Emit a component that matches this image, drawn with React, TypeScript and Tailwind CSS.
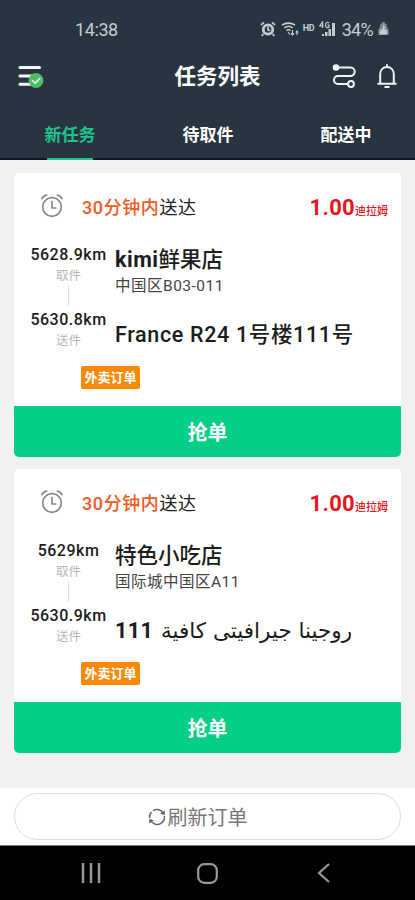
import type { ReactNode } from "react";

type Task = {
  pickupKm: string;
  dropKm: string;
  shop: ReactNode;
  shopAddress: string;
  destination: ReactNode;
};

const tasks: Task[] = [
  {
    pickupKm: "5628.9km",
    dropKm: "5630.8km",
    shop: (
      <>
        <span className="font-bold tracking-[0.5px]">kimi</span>鲜果店
      </>
    ),
    shopAddress: "中国区B03-011",
    destination: "France R24 1号楼111号",
  },
  {
    pickupKm: "5629km",
    dropKm: "5630.9km",
    shop: "特色小吃店",
    shopAddress: "国际城中国区A11",
    destination: (
      <span className="flex items-center">
        <span className="w-[46px] font-bold tracking-[0.4px]">111</span>
        <span dir="rtl" className="font-['DejaVu_Sans'] text-[21.5px] font-normal tracking-normal">
          روجينا جيرافيتى كافية
        </span>
      </span>
    ),
  },
];

function StatusBar() {
  return (
    <div className="flex h-[58px] shrink-0 items-center pr-[26px] pl-[75px] text-[#c3ccd2]">
      <span className="grow text-[18px] tracking-[-0.4px]">14:38</span>
      <svg className="mr-[5px] h-4 w-4" viewBox="0 0 16 16" fill="none" stroke="currentColor">
        <circle cx="8" cy="8.5" r="4.7" strokeWidth="2.8" />
        <path d="M8 5.5v3.3l2 .8M1 4l3-2.7M15 4l-3-2.7M3.5 13l-1.8 2M12.5 13l1.8 2" strokeWidth="1.7" />
      </svg>
      <svg className="mr-[4px] h-4 w-[18px]" viewBox="0 0 18 16" fill="none" stroke="currentColor" strokeWidth="1.6">
        <path d="M1 4.2C4.500 1.400 10.500 1.400 14 4.200M3.300 7c2.500-2 6-2 8.400 0M5.600 9.500c1.300-1 2.600-1 3.800 0" />
        <path d="M7 11l2 2.500M11.500 9v5M10 12.500l1.500 1.500 1.500-1.500M16 14v-4M14.800 11.500L16 10l1.200 1.500" strokeWidth="1.2" />
      </svg>
      <span className="mr-[3px] w-[13px] text-[9px] font-bold tracking-[-0.2px]">HD</span>
      <svg className="mr-[6px] h-4 w-[17px]" viewBox="0 0 17 16" fill="currentColor">
        <path d="M3 15v-2h2v2zM6 15v-4h2.500v4zM9.500 15V8H12v7zM13 15V2h3v13z" />
        <path d="M3.500 7V1L.8 5h4M10 2.200C8.500.5 6.500 1.500 6.500 4s2 3.500 3.500 2V4.200H8.500" fill="none" stroke="currentColor" strokeWidth="1.200" />
      </svg>
      <span className="mr-[5px] text-[18px] tracking-[-0.7px]">34%</span>
      <svg className="h-[14px] w-[11px]" viewBox="0 0 11 15" fill="currentColor">
        <path d="M4 0h3v2h2v3l2 3v6H0V8l2-3V2h2z" opacity=".55" />
        <path d="M5.500 2.500l2 4h-2l4 3v4h-8v-4l3-2z" />
      </svg>
    </div>
  );
}

function Header() {
  return (
    <header className="flex h-[160px] shrink-0 flex-col border-b-2 border-[#111526] bg-[#283541]">
      <StatusBar />
      <div className="grid h-[36px] shrink-0 grid-cols-[100px_1fr_100px] items-center">
        <svg className="ml-[17px] h-[26px] w-[27px]" viewBox="0 0 27 26" fill="none" strokeLinecap="round">
          <path d="M3 4.500h19.500M3 13h12M3 21.300h12" stroke="#f4f7f9" strokeWidth="3" />
          <circle cx="19" cy="17.500" r="7.400" fill="#4fbd67" />
          <path d="M15.500 17.500l2.600 2.700 4.600-4.600" stroke="#e6ffea" strokeWidth="1.600" />
        </svg>
        <h1 className="pt-[3px] pl-[20px] text-center text-[21.500px] font-bold whitespace-nowrap text-white">任务列表</h1>
        <div className="flex items-center gap-[19px] pl-[17px] text-[#eef2f5]">
          <svg className="h-[26px] w-[25px] shrink-0" viewBox="0 0 25 26" fill="none" stroke="currentColor" strokeWidth="2">
            <path d="M4 4.500h14.500a4.200 4.200 0 0 1 0 8.400H6a4 4 0 0 0 0 8.100h10" />
            <circle cx="4" cy="4.500" r="2.300" fill="currentColor" />
            <circle cx="19" cy="21" r="2.900" />
          </svg>
          <svg className="h-[26px] w-[22px] shrink-0" viewBox="0 0 22 26" fill="none" stroke="currentColor" strokeWidth="2">
            <path d="M4.200 20v-8.500C4.200 7 7 4 11 4s6.800 3 6.800 7.500V20" />
            <path d="M1.500 20.800h19M8.500 24h5M11 4V1.300" />
          </svg>
        </div>
      </div>
      <nav className="grid grow grid-cols-3 items-center justify-items-center pt-[19px] pl-px text-[17px] font-bold text-white">
        <span className="text-[#1dc28b]">新任务</span>
        <span>待取件</span>
        <span>配送中</span>
      </nav>
    </header>
  );
}

function AlarmIcon() {
  return (
    <svg className="-mt-[2px] h-[24px] w-[22px]" viewBox="0 0 22 24" fill="none" stroke="#888888" strokeWidth="1.700" strokeLinecap="round">
      <circle cx="11" cy="13" r="9.300" />
      <path d="M11 7.500V14h3.500M1 4.500C2 2.500 3.300 1.500 5.500 1.200M21 4.500c-1-2-2.300-3-4.500-3.300" />
    </svg>
  );
}

function TaskCard({ task }: { task: Task }) {
  return (
    <article className="flex h-[284px] shrink-0 flex-col overflow-hidden rounded-[5px] bg-white">
      <div className="flex h-[68px] items-center pr-[13px] pl-[27px]">
        <AlarmIcon />
        <div className="ml-[19px] grow pt-px text-[18px] font-medium tracking-[0.6px] text-[#222222]">
          <span className="text-[#f15a24]">30分钟内</span>
          <span className="font-normal">送达</span>
        </div>
        <div className="flex items-baseline text-[#e8131b]">
          <span className="text-[22px] font-bold tracking-[0.3px]">1.00</span>
          <span className="text-[11px] font-medium">迪拉姆</span>
        </div>
      </div>
      <div className="flex h-[125px] pl-[16px]">
        <div className="flex w-[77px] shrink-0 flex-col items-center">
          <span className="mt-[2px] h-[24px] text-[16px] leading-[24px] font-medium tracking-[0.5px] text-[#1c1c1c]">{task.pickupKm}</span>
          <span className="h-[17px] text-[12.500px] leading-[17px] text-[#b5b5b5]">取件</span>
          <span className="mt-px h-[21px] w-px bg-[#dddddd]" />
          <span className="mt-[2px] h-[24px] text-[16px] leading-[24px] font-medium tracking-[0.500px] text-[#1c1c1c]">{task.dropKm}</span>
          <span className="h-[17px] text-[12.500px] leading-[17px] text-[#b5b5b5]">送件</span>
        </div>
        <div className="ml-[8px] flex flex-col whitespace-nowrap">
          <span className="mt-[4px] h-[30px] text-[21.500px] leading-[30px] font-medium text-[#1c1c1c]">{task.shop}</span>
          <span className="h-[22px] text-[15.500px] leading-[22px] tracking-[0.5px] text-[#444444]">{task.shopAddress}</span>
          <span className="mt-[23px] h-[30px] text-[21.500px] leading-[30px] font-medium tracking-[0.650px] text-[#1c1c1c]">{task.destination}</span>
        </div>
      </div>
      <div className="flex grow pl-[67px]">
        <span className="flex h-[23px] w-[59px] items-center justify-center rounded-[2px] bg-[#fb8908] text-[13px] font-bold text-white">外卖订单</span>
      </div>
      <button className="h-[51px] bg-[#04cf87] pt-[3px] text-[20px] font-bold text-white">抢单</button>
    </article>
  );
}

export default function App() {
  return (
    <div className="flex h-[900px] w-[415px] flex-col overflow-hidden bg-[#f1f1f1] font-[Roboto,'Noto_Sans_CJK_SC',sans-serif]">
      <Header />
      <div className="-mt-[2px] ml-[47px] h-[2px] w-[46px] shrink-0 bg-[#1dc28b]" />
      <main className="flex h-[628px] shrink-0 flex-col gap-3 pt-[13px] pr-[14px] pl-[14px]">
        {tasks.map((task) => (
          <TaskCard key={task.dropKm} task={task} />
        ))}
      </main>
      <footer className="h-[57px] shrink-0 bg-white px-[14px] pt-[5px]">
        <button className="flex h-[47px] w-full items-center justify-center rounded-full border border-[#dddddd] pt-[3px] pr-[20px] text-[20px] text-[#777777]">
          <svg className="-mt-[2px] mr-[2px] h-[18px] w-[18px]" viewBox="0 0 18 18" fill="none" stroke="#666666" strokeWidth="1.500">
            <path d="M5 2.600A7.500 7.500 0 0 1 15.500 5.500M16.400 8A7.500 7.500 0 0 1 12.500 15.600M13 15.400A7.500 7.500 0 0 1 2.500 12.500M1.600 10A7.500 7.500 0 0 1 3.500 3.900" />
            <path d="M12 5.500l4.800 1.800V2.500zM6 12.500l-4.800-1.800v4.800z" fill="#666666" stroke="none" />
          </svg>
          刷新订单
        </button>
      </footer>
      <div className="grid h-[55px] shrink-0 grid-cols-3 items-center border-t border-[#777777] bg-black px-[33px] text-[#999999]">
        <svg className="h-[20px] w-[20px] justify-self-center" viewBox="0 0 20 20" stroke="currentColor" strokeWidth="2.400">
          <path d="M2 0v20M10 0v20M18 0v20" />
        </svg>
        <svg className="h-[21px] w-[21px] justify-self-center" viewBox="0 0 21 21" fill="none" stroke="currentColor" strokeWidth="2.200">
          <rect x="1.200" y="1.200" width="18.600" height="18.600" rx="6" />
        </svg>
        <svg className="h-[20px] w-[13px] justify-self-center" viewBox="0 0 13 20" fill="none" stroke="currentColor" strokeWidth="2.200">
          <path d="M12 1L2 10l10 9" />
        </svg>
      </div>
    </div>
  );
}
